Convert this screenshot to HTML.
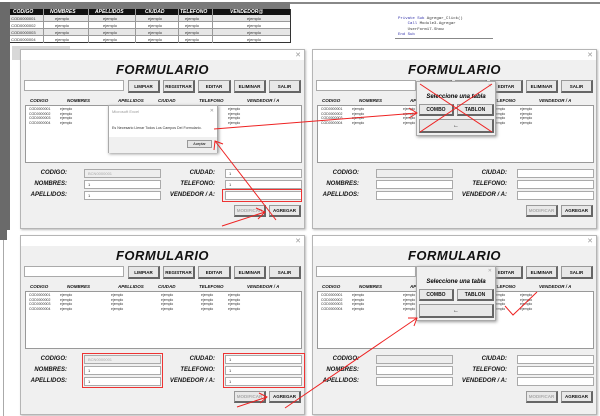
<!DOCTYPE html>
<html><head><meta charset="utf-8"><style>
*{margin:0;padding:0;box-sizing:border-box}
body{width:600px;height:416px;background:#fff;position:relative;overflow:hidden;font-family:"Liberation Sans",sans-serif}
.a{position:absolute}
.f{position:absolute;width:285px;height:180px;background:#f0f0f0;border:1px solid #b5b5b5;box-shadow:1px 1px 2px #bbb}
.tb{position:absolute;left:0;top:0;width:100%;height:10px;background:#fff}
.x{position:absolute;right:3px;top:1px;font-size:7px;color:#999}
.ti{position:absolute;left:0;width:100%;top:12px;text-align:center;font-size:13px;font-weight:bold;font-style:italic;letter-spacing:.5px;color:#111}
.in{position:absolute;background:#fff;border:1px solid #aaa;font-size:4px;color:#333;padding-left:3px;line-height:8px}
.bt{position:absolute;background:#e8e8e8;border:1px solid #999;border-right:2px solid #666;border-bottom:2px solid #666;font-size:4.5px;font-weight:bold;text-align:center;color:#111}
.h{position:absolute;top:48px;font-size:4.5px;font-weight:bold;font-style:italic;color:#111}
.lb{position:absolute;left:4px;top:55px;width:277px;height:58px;background:#fff;border:1px solid #999}
.r{position:absolute;font-size:3.5px;color:#333}
.l{position:absolute;font-size:6px;font-weight:bold;font-style:italic;text-align:right;width:60px;color:#111}
.red{position:absolute;border:1.5px solid #e33}
</style></head><body>

<!-- Excel background -->
<div class="a" style="left:0;top:0;width:600px;height:3px;background:#fff"></div>
<div class="a" style="left:0;top:2px;width:10px;height:228px;background:#6a6a6a"></div>
<div class="a" style="left:10px;top:2px;width:280px;height:7px;background:#7a7a7a"></div>
<div class="a" style="left:290px;top:2px;width:310px;height:2px;background:#888"></div>
<div class="a" style="left:10px;top:9px;width:280px;height:6px;background:#111;color:#fff;font-size:5px;font-weight:bold;font-style:italic;line-height:6px">
<span class="a" style="left:3px">CODIGO</span><span class="a" style="left:40px">NOMBRES</span><span class="a" style="left:85px">APELLIDOS</span><span class="a" style="left:135px">CIUDAD</span><span class="a" style="left:170px">TELEFONO</span><span class="a" style="left:220px">VENDEDOR@</span></div>
<div class="a" style="left:10px;top:15px;width:280px;height:28px;font-size:4px;color:#333;line-height:7px">
<div style="background:#e6e6e6;height:7px;border-bottom:1px solid #999">&nbsp;COD0000001</div>
<div style="height:7px;border-bottom:1px solid #999">&nbsp;COD0000002</div>
<div style="background:#e6e6e6;height:7px;border-bottom:1px solid #999">&nbsp;COD0000003</div>
<div style="height:7px;border-bottom:1px solid #333">&nbsp;COD0000004</div>
<span class="a" style="left:45px;top:0">ejemplo</span><span class="a" style="left:45px;top:7px">ejemplo</span><span class="a" style="left:45px;top:14px">ejemplo</span><span class="a" style="left:45px;top:21px">ejemplo</span>
<span class="a" style="left:93px;top:0">ejemplo</span><span class="a" style="left:93px;top:7px">ejemplo</span><span class="a" style="left:93px;top:14px">ejemplo</span><span class="a" style="left:93px;top:21px">ejemplo</span>
<span class="a" style="left:138px;top:0">ejemplo</span><span class="a" style="left:138px;top:7px">ejemplo</span><span class="a" style="left:138px;top:14px">ejemplo</span><span class="a" style="left:138px;top:21px">ejemplo</span>
<span class="a" style="left:175px;top:0">ejemplo</span><span class="a" style="left:175px;top:7px">ejemplo</span><span class="a" style="left:175px;top:14px">ejemplo</span><span class="a" style="left:175px;top:21px">ejemplo</span>
<span class="a" style="left:237px;top:0">ejemplo</span><span class="a" style="left:237px;top:7px">ejemplo</span><span class="a" style="left:237px;top:14px">ejemplo</span><span class="a" style="left:237px;top:21px">ejemplo</span>
</div>
<div class="a" style="left:43px;top:9px;width:1px;height:34px;background:#999"></div>
<div class="a" style="left:88px;top:9px;width:1px;height:34px;background:#999"></div>
<div class="a" style="left:135px;top:9px;width:1px;height:34px;background:#999"></div>
<div class="a" style="left:178px;top:9px;width:1px;height:34px;background:#999"></div>
<div class="a" style="left:212px;top:9px;width:1px;height:34px;background:#999"></div>
<div class="a" style="left:290px;top:9px;width:1px;height:34px;background:#333"></div>
<div class="a" style="left:12px;top:46px;width:58px;height:14px;background:#d8d8d8"></div>
<div class="a" style="left:398px;top:17px;font-family:'Liberation Mono',monospace;font-size:4px;line-height:5.3px;color:#333;white-space:pre"><span style="color:#33a">Private Sub</span> Agregar_Click()
    <span style="color:#33a">Call</span> Module3.Agregar
    UserForm17.Show
<span style="color:#33a">End Sub</span></div>
<div class="a" style="left:395px;top:38px;width:98px;height:1px;background:#888"></div>
<div class="a" style="left:0;top:230px;width:7px;height:10px;background:#6a6a6a"></div>
<div class="a" style="left:3px;top:240px;width:1px;height:176px;background:#aaa"></div>

<!-- FORM TEMPLATE x4 -->
<div class="f" style="left:20px;top:49px">
<div class="tb"></div><div class="x">✕</div><div class="ti">FORMULARIO</div>
<div class="in" style="left:3px;top:30px;width:100px;height:11px"></div>
<div class="bt" style="left:107px;top:30px;width:32px;height:13px;line-height:11px">LIMPIAR</div>
<div class="bt" style="left:142px;top:30px;width:32px;height:13px;line-height:11px">REGISTRAR</div>
<div class="bt" style="left:177px;top:30px;width:33px;height:13px;line-height:11px">EDITAR</div>
<div class="bt" style="left:213px;top:30px;width:32px;height:13px;line-height:11px">ELIMINAR</div>
<div class="bt" style="left:248px;top:30px;width:32px;height:13px;line-height:11px">SALIR</div>
<div class="h" style="left:9px">CODIGO</div><div class="h" style="left:46px">NOMBRES</div><div class="h" style="left:97px">APELLIDOS</div><div class="h" style="left:137px">CIUDAD</div><div class="h" style="left:178px">TELEFONO</div><div class="h" style="left:226px">VENDEDOR / A</div>
<div class="lb"><div class="r" style="left:3px;top:1px;line-height:4.7px">COD0000001<br>COD0000002<br>COD0000003<br>COD0000004</div><div class="r" style="left:34px;top:1px;line-height:4.7px">ejemplo<br>ejemplo<br>ejemplo<br>ejemplo</div><div class="r" style="left:85px;top:1px;line-height:4.7px">ejemplo<br>ejemplo<br>ejemplo<br>ejemplo</div><div class="r" style="left:135px;top:1px;line-height:4.7px">ejemplo<br>ejemplo<br>ejemplo<br>ejemplo</div><div class="r" style="left:175px;top:1px;line-height:4.7px">ejemplo<br>ejemplo<br>ejemplo<br>ejemplo</div><div class="r" style="left:202px;top:1px;line-height:4.7px">ejemplo<br>ejemplo<br>ejemplo<br>ejemplo</div></div>
<div class="l" style="left:-14px;top:120px">CODIGO:</div><div class="l" style="left:-14px;top:131px">NOMBRES:</div><div class="l" style="left:-14px;top:142px">APELLIDOS:</div>
<div class="in" style="left:63px;top:119px;width:77px;height:9px;background:#eee;color:#aaa">BCN0000001</div>
<div class="in" style="left:63px;top:130px;width:77px;height:9px">1</div>
<div class="in" style="left:63px;top:141px;width:77px;height:9px">1</div>
<div class="l" style="left:134px;top:120px">CIUDAD:</div><div class="l" style="left:134px;top:131px">TELEFONO:</div><div class="l" style="left:134px;top:142px">VENDEDOR / A:</div>
<div class="in" style="left:204px;top:119px;width:77px;height:9px">1</div>
<div class="in" style="left:204px;top:130px;width:77px;height:9px">1</div>
<div class="in" style="left:204px;top:141px;width:77px;height:9px"></div>
<div class="bt" style="left:213px;top:155px;width:32px;height:12px;line-height:10px;color:#aaa">MODIFICAR</div>
<div class="bt" style="left:248px;top:155px;width:32px;height:12px;line-height:10px">AGREGAR</div>
<!-- msgbox -->
<div class="a" style="left:87px;top:55px;width:110px;height:48px;background:#fff;border:1px solid #aaa;box-shadow:1px 1px 3px #999">
<div class="a" style="left:3px;top:3px;font-size:4px;color:#999">Microsoft Excel</div><div class="a" style="right:3px;top:2px;font-size:5px;color:#999">✕</div>
<div class="a" style="left:3px;top:20px;font-size:3.6px;color:#333">Es Necesario Llenar Todos Los Campos Del Formulario.</div>
<div class="a" style="left:0;top:31px;width:100%;height:16px;background:#f0f0f0"></div>
<div class="a" style="left:78px;top:34px;width:25px;height:8px;border:1px solid #999;background:#e6e6e6;font-size:3.6px;text-align:center;line-height:6px">Aceptar</div>
</div>
</div>

<div class="f" style="left:312px;top:49px">
<div class="tb"></div><div class="x">✕</div><div class="ti">FORMULARIO</div>
<div class="in" style="left:3px;top:30px;width:100px;height:11px"></div>
<div class="bt" style="left:107px;top:30px;width:32px;height:13px;line-height:11px">LIMPIAR</div>
<div class="bt" style="left:142px;top:30px;width:32px;height:13px;line-height:11px">REGISTRAR</div>
<div class="bt" style="left:177px;top:30px;width:33px;height:13px;line-height:11px">EDITAR</div>
<div class="bt" style="left:213px;top:30px;width:32px;height:13px;line-height:11px">ELIMINAR</div>
<div class="bt" style="left:248px;top:30px;width:32px;height:13px;line-height:11px">SALIR</div>
<div class="h" style="left:9px">CODIGO</div><div class="h" style="left:46px">NOMBRES</div><div class="h" style="left:97px">APELLIDOS</div><div class="h" style="left:137px">CIUDAD</div><div class="h" style="left:178px">TELEFONO</div><div class="h" style="left:226px">VENDEDOR / A</div>
<div class="lb"><div class="r" style="left:3px;top:1px;line-height:4.7px">COD0000001<br>COD0000002<br>COD0000003<br>COD0000004</div><div class="r" style="left:34px;top:1px;line-height:4.7px">ejemplo<br>ejemplo<br>ejemplo<br>ejemplo</div><div class="r" style="left:85px;top:1px;line-height:4.7px">ejemplo<br>ejemplo<br>ejemplo<br>ejemplo</div><div class="r" style="left:175px;top:1px;line-height:4.7px">ejemplo<br>ejemplo<br>ejemplo<br>ejemplo</div><div class="r" style="left:202px;top:1px;line-height:4.7px">ejemplo<br>ejemplo<br>ejemplo<br>ejemplo</div></div>
<div class="l" style="left:-14px;top:120px">CODIGO:</div><div class="l" style="left:-14px;top:131px">NOMBRES:</div><div class="l" style="left:-14px;top:142px">APELLIDOS:</div>
<div class="in" style="left:63px;top:119px;width:77px;height:9px;background:#eee"></div>
<div class="in" style="left:63px;top:130px;width:77px;height:9px"></div>
<div class="in" style="left:63px;top:141px;width:77px;height:9px"></div>
<div class="l" style="left:134px;top:120px">CIUDAD:</div><div class="l" style="left:134px;top:131px">TELEFONO:</div><div class="l" style="left:134px;top:142px">VENDEDOR / A:</div>
<div class="in" style="left:204px;top:119px;width:77px;height:9px"></div>
<div class="in" style="left:204px;top:130px;width:77px;height:9px"></div>
<div class="in" style="left:204px;top:141px;width:77px;height:9px"></div>
<div class="bt" style="left:213px;top:155px;width:32px;height:12px;line-height:10px;color:#aaa">MODIFICAR</div>
<div class="bt" style="left:248px;top:155px;width:32px;height:12px;line-height:10px">AGREGAR</div>
<div class="a" style="left:103px;top:31px;width:80px;height:55px;background:#f0f0f0;border:1px solid #aaa;box-shadow:1px 1px 3px #999">
<div class="a" style="right:3px;top:1px;font-size:5px;color:#aaa">✕</div>
<div class="a" style="left:0;width:100%;top:12px;text-align:center;font-size:6px;font-weight:bold;font-style:italic">Seleccione una tabla</div>
<div class="bt" style="left:2px;top:22px;width:35px;height:12px;line-height:10px;font-size:5px">COMBO</div>
<div class="bt" style="left:40px;top:22px;width:37px;height:12px;line-height:10px;font-size:5px">TABLON</div>
<div class="bt" style="left:2px;top:37px;width:75px;height:14px;line-height:12px;font-size:6px">←</div>
</div>
</div>

<div class="f" style="left:20px;top:235px">
<div class="tb"></div><div class="x">✕</div><div class="ti">FORMULARIO</div>
<div class="in" style="left:3px;top:30px;width:100px;height:11px"></div>
<div class="bt" style="left:107px;top:30px;width:32px;height:13px;line-height:11px">LIMPIAR</div>
<div class="bt" style="left:142px;top:30px;width:32px;height:13px;line-height:11px">REGISTRAR</div>
<div class="bt" style="left:177px;top:30px;width:33px;height:13px;line-height:11px">EDITAR</div>
<div class="bt" style="left:213px;top:30px;width:32px;height:13px;line-height:11px">ELIMINAR</div>
<div class="bt" style="left:248px;top:30px;width:32px;height:13px;line-height:11px">SALIR</div>
<div class="h" style="left:9px">CODIGO</div><div class="h" style="left:46px">NOMBRES</div><div class="h" style="left:97px">APELLIDOS</div><div class="h" style="left:137px">CIUDAD</div><div class="h" style="left:178px">TELEFONO</div><div class="h" style="left:226px">VENDEDOR / A</div>
<div class="lb"><div class="r" style="left:3px;top:1px;line-height:4.7px">COD0000001<br>COD0000002<br>COD0000003<br>COD0000004</div><div class="r" style="left:34px;top:1px;line-height:4.7px">ejemplo<br>ejemplo<br>ejemplo<br>ejemplo</div><div class="r" style="left:85px;top:1px;line-height:4.7px">ejemplo<br>ejemplo<br>ejemplo<br>ejemplo</div><div class="r" style="left:135px;top:1px;line-height:4.7px">ejemplo<br>ejemplo<br>ejemplo<br>ejemplo</div><div class="r" style="left:175px;top:1px;line-height:4.7px">ejemplo<br>ejemplo<br>ejemplo<br>ejemplo</div><div class="r" style="left:202px;top:1px;line-height:4.7px">ejemplo<br>ejemplo<br>ejemplo<br>ejemplo</div></div>
<div class="l" style="left:-14px;top:120px">CODIGO:</div><div class="l" style="left:-14px;top:131px">NOMBRES:</div><div class="l" style="left:-14px;top:142px">APELLIDOS:</div>
<div class="in" style="left:63px;top:119px;width:77px;height:9px;background:#eee;color:#aaa">BCN0000001</div>
<div class="in" style="left:63px;top:130px;width:77px;height:9px">1</div>
<div class="in" style="left:63px;top:141px;width:77px;height:9px">1</div>
<div class="l" style="left:134px;top:120px">CIUDAD:</div><div class="l" style="left:134px;top:131px">TELEFONO:</div><div class="l" style="left:134px;top:142px">VENDEDOR / A:</div>
<div class="in" style="left:204px;top:119px;width:77px;height:9px">1</div>
<div class="in" style="left:204px;top:130px;width:77px;height:9px">1</div>
<div class="in" style="left:204px;top:141px;width:77px;height:9px">1</div>
<div class="bt" style="left:213px;top:155px;width:32px;height:12px;line-height:10px;color:#aaa">MODIFICAR</div>
<div class="bt" style="left:248px;top:155px;width:32px;height:12px;line-height:10px">AGREGAR</div>
<div class="red" style="left:61px;top:117px;width:81px;height:35px"></div>
<div class="red" style="left:202px;top:117px;width:82px;height:35px"></div>
</div>

<div class="f" style="left:312px;top:235px">
<div class="tb"></div><div class="x">✕</div><div class="ti">FORMULARIO</div>
<div class="in" style="left:3px;top:30px;width:100px;height:11px"></div>
<div class="bt" style="left:107px;top:30px;width:32px;height:13px;line-height:11px">LIMPIAR</div>
<div class="bt" style="left:142px;top:30px;width:32px;height:13px;line-height:11px">REGISTRAR</div>
<div class="bt" style="left:177px;top:30px;width:33px;height:13px;line-height:11px">EDITAR</div>
<div class="bt" style="left:213px;top:30px;width:32px;height:13px;line-height:11px">ELIMINAR</div>
<div class="bt" style="left:248px;top:30px;width:32px;height:13px;line-height:11px">SALIR</div>
<div class="h" style="left:9px">CODIGO</div><div class="h" style="left:46px">NOMBRES</div><div class="h" style="left:97px">APELLIDOS</div><div class="h" style="left:137px">CIUDAD</div><div class="h" style="left:178px">TELEFONO</div><div class="h" style="left:226px">VENDEDOR / A</div>
<div class="lb"><div class="r" style="left:3px;top:1px;line-height:4.7px">COD0000001<br>COD0000002<br>COD0000003<br>COD0000004</div><div class="r" style="left:34px;top:1px;line-height:4.7px">ejemplo<br>ejemplo<br>ejemplo<br>ejemplo</div><div class="r" style="left:85px;top:1px;line-height:4.7px">ejemplo<br>ejemplo<br>ejemplo<br>ejemplo</div><div class="r" style="left:175px;top:1px;line-height:4.7px">ejemplo<br>ejemplo<br>ejemplo<br>ejemplo</div><div class="r" style="left:202px;top:1px;line-height:4.7px">ejemplo<br>ejemplo<br>ejemplo<br>ejemplo</div></div>
<div class="l" style="left:-14px;top:120px">CODIGO:</div><div class="l" style="left:-14px;top:131px">NOMBRES:</div><div class="l" style="left:-14px;top:142px">APELLIDOS:</div>
<div class="in" style="left:63px;top:119px;width:77px;height:9px;background:#eee"></div>
<div class="in" style="left:63px;top:130px;width:77px;height:9px"></div>
<div class="in" style="left:63px;top:141px;width:77px;height:9px"></div>
<div class="l" style="left:134px;top:120px">CIUDAD:</div><div class="l" style="left:134px;top:131px">TELEFONO:</div><div class="l" style="left:134px;top:142px">VENDEDOR / A:</div>
<div class="in" style="left:204px;top:119px;width:77px;height:9px"></div>
<div class="in" style="left:204px;top:130px;width:77px;height:9px"></div>
<div class="in" style="left:204px;top:141px;width:77px;height:9px"></div>
<div class="bt" style="left:213px;top:155px;width:32px;height:12px;line-height:10px;color:#aaa">MODIFICAR</div>
<div class="bt" style="left:248px;top:155px;width:32px;height:12px;line-height:10px">AGREGAR</div>
<div class="a" style="left:103px;top:30px;width:80px;height:55px;background:#f0f0f0;border:1px solid #aaa;box-shadow:1px 1px 3px #999">
<div class="a" style="right:3px;top:1px;font-size:5px;color:#aaa">✕</div>
<div class="a" style="left:0;width:100%;top:12px;text-align:center;font-size:6px;font-weight:bold;font-style:italic">Seleccione una tabla</div>
<div class="bt" style="left:2px;top:22px;width:35px;height:12px;line-height:10px;font-size:5px">COMBO</div>
<div class="bt" style="left:40px;top:22px;width:37px;height:12px;line-height:10px;font-size:5px">TABLON</div>
<div class="bt" style="left:2px;top:37px;width:75px;height:14px;line-height:12px;font-size:6px">←</div>
</div>
</div>

<!-- red annotations -->
<div class="red" style="left:222px;top:189px;width:80px;height:13px"></div>
<svg class="a" style="left:0;top:0" width="600" height="416" viewBox="0 0 600 416">
<g stroke="#e22" stroke-width="1" fill="none">
<line x1="214" y1="129" x2="417" y2="113"/><polyline points="409,108 417,113 409,118"/>
<line x1="276" y1="220" x2="215" y2="141"/><polyline points="214,150 215,141 223,144"/>
<line x1="222" y1="226" x2="265" y2="212"/><polyline points="256,208 265,212 258,219"/>
<line x1="237" y1="407" x2="267" y2="397"/><polyline points="259,393 267,397 260,403"/>
<line x1="285" y1="408" x2="417" y2="318"/><polyline points="408,318 417,318 414,326"/>
<polyline points="505,306 513,315 537,292"/>
<line x1="420" y1="84" x2="492" y2="132"/><line x1="492" y1="84" x2="420" y2="132"/>
</g></svg>
</body></html>
